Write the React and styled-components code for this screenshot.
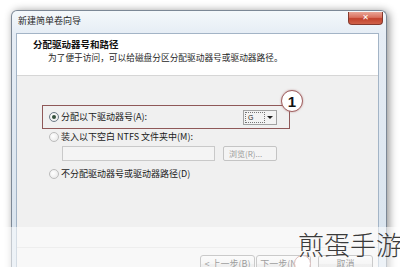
import React from "react";
import styled, { createGlobalStyle } from "styled-components";

const GlobalStyle = createGlobalStyle`
  html, body {
    margin: 0;
    padding: 0;
    background: #ffffff;
  }
  body {
    width: 400px;
    height: 267px;
    overflow: hidden;
    font-family: "Noto Sans CJK SC", "Liberation Sans", sans-serif;
    color: #1a1a1a;
  }
`;

function App() {
  return (
    <>
      <GlobalStyle />
      <Page>
        <Window>
          <TitleBar>
            <TitleText>新建简单卷向导</TitleText>
            <CloseButton>✕</CloseButton>
          </TitleBar>
          <Client>
            <Header>
              <HeaderTitle>分配驱动器号和路径</HeaderTitle>
              <HeaderSub>为了便于访问，可以给磁盘分区分配驱动器号或驱动器路径。</HeaderSub>
            </Header>
            <Body>
              <Highlight>
                <Radio $checked />
                <Label>分配以下驱动器号(A):</Label>
                <Combo>
                  <ComboValue>G</ComboValue>
                  <ComboArrow />
                </Combo>
                <Callout>1</Callout>
              </Highlight>
              <Option $top={2}>
                <Radio />
                <Label>装入以下空白 NTFS 文件夹中(M):</Label>
              </Option>
              <FieldRow>
                <PathInput />
                <SmallButton>浏览(R)...</SmallButton>
              </FieldRow>
              <Option $top={7}>
                <Radio />
                <Label>不分配驱动器号或驱动器路径(D)</Label>
              </Option>
            </Body>
            <Footer>
              <WizardButton>&lt; 上一步(B)</WizardButton>
              <WizardButton>下一步(N) &gt;</WizardButton>
              <WizardButton $gap={6}>取消</WizardButton>
            </Footer>
          </Client>
        </Window>
        <HiddenCallout />
        <Watermark>
          <WatermarkText>煎蛋手游</WatermarkText>
        </Watermark>
      </Page>
    </>
  );
}

export default App;

const Page = styled.div`
  position: relative;
  width: 400px;
  height: 267px;
  overflow: hidden;
  box-sizing: border-box;
  padding: 10px 0 0 11px;
`;

const Window = styled.div`
  width: 376px;
  height: 300px;
  box-sizing: border-box;
  border: 1px solid #7c8896;
  border-bottom: none;
  border-radius: 6px 6px 0 0;
  background: linear-gradient(180deg, #f4f8fb 0, #e6edf5 22px, #d5e1ec 100%);
  box-shadow: 2px 1px 9px rgba(0, 0, 0, 0.45);
  padding: 0 7px 0 4px;
  display: flex;
  flex-direction: column;
`;

const TitleBar = styled.div`
  height: 22px;
  display: flex;
  align-items: flex-start;
  justify-content: space-between;
`;

const TitleText = styled.span`
  margin: 4px 0 0 2px;
  font-size: 9px;
  line-height: 12px;
  color: #1e1e1e;
`;

const CloseButton = styled.div`
  margin: 1px -4px 0 0;
  width: 35px;
  height: 13px;
  box-sizing: border-box;
  border: 1px solid #84392d;
  border-top: none;
  border-radius: 0 0 4px 4px;
  background: linear-gradient(180deg, #e9a596 0, #d9705d 45%, #c2422c 55%, #d0624a 100%);
  color: #ffffff;
  font-family: "DejaVu Sans", sans-serif;
  font-size: 8px;
  font-weight: bold;
  line-height: 12px;
  text-align: center;
`;

const Client = styled.div`
  flex: 1;
  border: 1px solid #a3b4c6;
  border-bottom: none;
  background: #f0f0f0;
  display: flex;
  flex-direction: column;
`;

const Header = styled.div`
  height: 42px;
  box-sizing: border-box;
  background: #ffffff;
  border-bottom: 1px solid #d6d6d6;
  padding: 4px 0 0 16px;
`;

const HeaderTitle = styled.div`
  font-size: 9.5px;
  font-weight: bold;
  line-height: 13px;
  color: #111;
`;

const HeaderSub = styled.div`
  margin-top: 1px;
  padding-left: 15px;
  font-size: 8.7px;
  line-height: 12px;
  color: #1e1e1e;
  white-space: nowrap;
`;

const Body = styled.div`
  height: 171px;
  box-sizing: border-box;
  padding: 29px 0 0 25px;
  display: flex;
  flex-direction: column;
  align-items: flex-start;
`;

const Highlight = styled.div`
  position: relative;
  width: 248px;
  height: 24px;
  box-sizing: border-box;
  border: 1.5px solid #8f5858;
  display: flex;
  align-items: center;
  gap: 2px;
  padding: 0 12px 0 6px;
`;

const Callout = styled.div`
  position: absolute;
  right: -14px;
  top: -16px;
  width: 22px;
  height: 22px;
  box-sizing: border-box;
  border: 1.5px solid #a06060;
  border-radius: 50%;
  background: #ffffff;
  box-shadow: 0 0 2px rgba(160, 90, 90, 0.6);
  display: flex;
  align-items: center;
  justify-content: center;
  font-family: "Liberation Sans", sans-serif;
  font-size: 15px;
  font-weight: bold;
  color: #111;
`;

const HiddenCallout = styled.div`
  position: absolute;
  left: 294px;
  top: 255px;
  width: 17px;
  height: 17px;
  box-sizing: border-box;
  border: 1.5px solid #b06e6e;
  border-radius: 50%;
  background: #ffffff;
`;

const Option = styled.div`
  margin-top: ${(p) => p.$top}px;
  padding-left: 7px;
  height: 12px;
  display: flex;
  align-items: center;
  gap: 2px;
`;

const Radio = styled.span`
  width: 8px;
  height: 8px;
  flex-shrink: 0;
  border-radius: 50%;
  border: 1px solid ${(p) => (p.$checked ? "#6d7b88" : "#bcbcbc")};
  background: radial-gradient(circle at 40% 40%, #ffffff 0, #e4e4e4 100%);
  display: flex;
  align-items: center;
  justify-content: center;

  &::after {
    content: "";
    display: ${(p) => (p.$checked ? "block" : "none")};
    width: 4px;
    height: 4px;
    border-radius: 50%;
    background: #34503c;
  }
`;

const Label = styled.span`
  font-size: 9px;
  line-height: 12px;
  white-space: nowrap;
  color: #1a1a1a;
`;

const Combo = styled.div`
  margin-left: auto;
  width: 34px;
  height: 15px;
  box-sizing: border-box;
  border: 1px solid #a2a2a2;
  background: #f3f3f3;
  display: flex;
  align-items: center;
  padding: 1px 3px 1px 1px;
  gap: 2px;
`;

const ComboValue = styled.span`
  flex: 1;
  height: 100%;
  box-sizing: border-box;
  border: 1px dotted #777;
  font-family: "Liberation Sans", sans-serif;
  font-size: 7px;
  line-height: 9px;
  padding-left: 2px;
  color: #222;
`;

const ComboArrow = styled.span`
  width: 0;
  height: 0;
  border-left: 3px solid transparent;
  border-right: 3px solid transparent;
  border-top: 3px solid #222;
`;

const FieldRow = styled.div`
  margin-top: 3px;
  padding-left: 20px;
  display: flex;
  gap: 8px;
`;

const PathInput = styled.div`
  width: 153px;
  height: 15px;
  box-sizing: border-box;
  border: 1px solid #c9c9c9;
  background: #f4f4f4;
`;

const SmallButton = styled.div`
  width: 54px;
  height: 15px;
  box-sizing: border-box;
  border: 1px solid #c4c4c4;
  border-radius: 2px;
  background: #f4f4f4;
  font-size: 8px;
  line-height: 13px;
  padding-left: 5px;
  color: #9a9a9a;
`;

const Footer = styled.div`
  border-top: 1px solid #dadada;
  padding: 7px 5px 0 0;
  display: flex;
  justify-content: flex-end;
  gap: 1px;
`;

const WizardButton = styled.div`
  margin-left: ${(p) => p.$gap || 0}px;
  width: 55px;
  height: 18px;
  box-sizing: border-box;
  border: 1px solid #8a8a8a;
  border-radius: 3px;
  background: linear-gradient(180deg, #f6f6f6 0, #ebebeb 50%, #dddddd 51%, #d6d6d6 100%);
  font-size: 9px;
  line-height: 16px;
  text-align: center;
  white-space: nowrap;
  color: #222;
`;

const Watermark = styled.div`
  position: absolute;
  left: 0;
  right: 0;
  top: 227px;
  bottom: 0;
  background: rgba(255, 255, 255, 0.55);
`;

const WatermarkText = styled.span`
  position: absolute;
  left: 298px;
  top: 2px;
  font-size: 26px;
  font-weight: 300;
  line-height: 30px;
  white-space: nowrap;
  color: #3a3a3a;
`;
